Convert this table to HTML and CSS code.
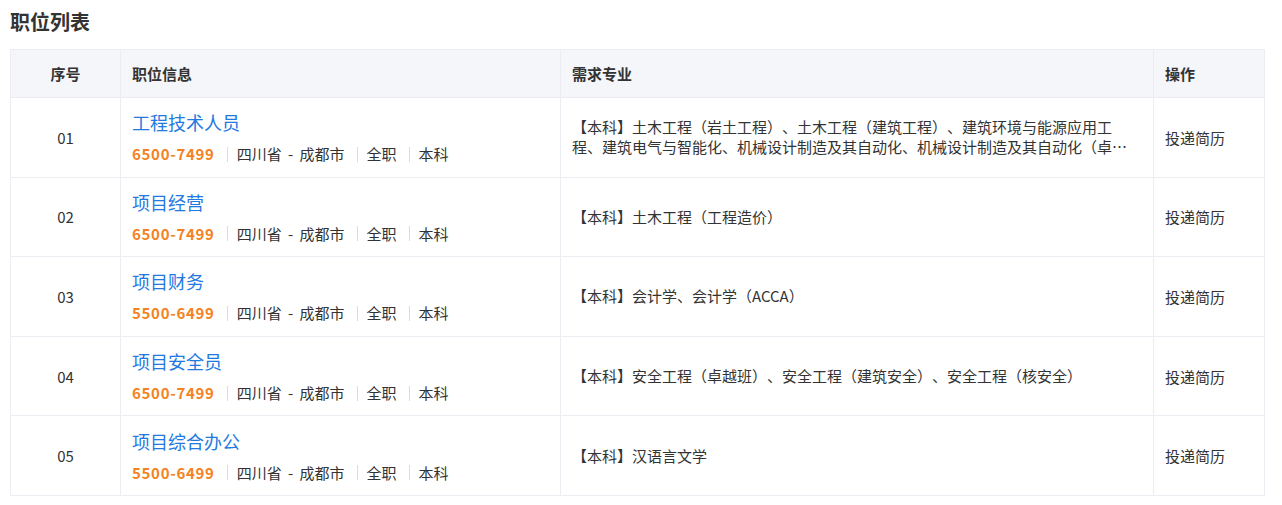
FILE: index.html
```html
<!DOCTYPE html>
<html lang="zh-CN">
<head>
<meta charset="utf-8">
<title>职位列表</title>
<link rel="stylesheet" href="styles.css">
</head>
<body>
<div class="page">
  <h2 class="page-title">职位列表</h2>
  <table class="job-table">
    <colgroup>
      <col class="c-no"><col class="c-info"><col class="c-major"><col class="c-op">
    </colgroup>
    <thead>
      <tr><th class="center">序号</th><th>职位信息</th><th>需求专业</th><th>操作</th></tr>
    </thead>
    <tbody>
      <tr>
        <td class="center no">01</td>
        <td><div class="job-name">工程技术人员</div><div class="meta"><span class="salary">6500-7499</span><span class="sep"></span><span class="loc">四川省 - 成都市</span><span class="sep"></span>全职<span class="sep"></span>本科</div></td>
        <td class="major-cell"><div class="major">【本科】土木工程（岩土工程）、土木工程（建筑工程）、建筑环境与能源应用工程、建筑电气与智能化、机械设计制造及其自动化、机械设计制造及其自动化（卓越班）</div></td>
        <td class="op">投递简历</td>
      </tr>
      <tr>
        <td class="center no">02</td>
        <td><div class="job-name">项目经营</div><div class="meta"><span class="salary">6500-7499</span><span class="sep"></span><span class="loc">四川省 - 成都市</span><span class="sep"></span>全职<span class="sep"></span>本科</div></td>
        <td class="major-cell"><div class="major">【本科】土木工程（工程造价）</div></td>
        <td class="op">投递简历</td>
      </tr>
      <tr>
        <td class="center no">03</td>
        <td><div class="job-name">项目财务</div><div class="meta"><span class="salary">5500-6499</span><span class="sep"></span><span class="loc">四川省 - 成都市</span><span class="sep"></span>全职<span class="sep"></span>本科</div></td>
        <td class="major-cell"><div class="major">【本科】会计学、会计学（ACCA）</div></td>
        <td class="op">投递简历</td>
      </tr>
      <tr>
        <td class="center no">04</td>
        <td><div class="job-name">项目安全员</div><div class="meta"><span class="salary">6500-7499</span><span class="sep"></span><span class="loc">四川省 - 成都市</span><span class="sep"></span>全职<span class="sep"></span>本科</div></td>
        <td class="major-cell"><div class="major">【本科】安全工程（卓越班）、安全工程（建筑安全）、安全工程（核安全）</div></td>
        <td class="op">投递简历</td>
      </tr>
      <tr>
        <td class="center no">05</td>
        <td><div class="job-name">项目综合办公</div><div class="meta"><span class="salary">5500-6499</span><span class="sep"></span><span class="loc">四川省 - 成都市</span><span class="sep"></span>全职<span class="sep"></span>本科</div></td>
        <td class="major-cell"><div class="major">【本科】汉语言文学</div></td>
        <td class="op">投递简历</td>
      </tr>
    </tbody>
  </table>
</div>
</body>
</html>
```
FILE: styles.css
```css
* { box-sizing: border-box; }
html, body { margin: 0; padding: 0; background: #fff; }
body {
  font-family: "Noto Sans CJK SC", "Noto Sans", sans-serif;
  color: #333;
  text-spacing-trim: space-all;
}
.page { padding: 10px 18px 0 10px; }
.page-title {
  margin: 0 0 15px;
  font-size: 20px;
  line-height: 24px;
  font-weight: 700;
  color: #333;
}
.job-table {
  width: 1254px;
  border-collapse: collapse;
  table-layout: fixed;
  border: 1px solid #ebedf3;
}
.c-no { width: 110px; }
.c-info { width: 440px; }
.c-major { width: 593px; }
.c-op { width: 111px; }
.job-table th, .job-table td {
  border: 1px solid #ebedf3;
  padding: 0 11px;
  text-align: left;
  vertical-align: middle;
  font-size: 15px;
}
.job-table th {
  height: 48px;
  background: #f5f6fa;
  font-weight: 700;
  color: #333;
}
.job-table td { height: 79.6px; padding-top: 12px; padding-bottom: 12px; }
.job-table td.major-cell { padding-right: 13px; }
.job-table .center { text-align: center; }
.no { font-size: 15px; color: #333; }
.job-name {
  font-size: 18px;
  line-height: 24px;
  color: #2379e0;
}
.meta {
  margin-top: 10px;
  font-size: 15px;
  line-height: 20px;
  color: #333;
  display: flex;
  align-items: center;
}
.salary { color: #f58220; font-weight: 700; letter-spacing: 0.7px; }
.loc { word-spacing: 3px; }
.sep {
  display: inline-block;
  width: 1px;
  height: 15px;
  background: #dcdcdc;
  margin: 0 9px 0 12px;
}
.major {
  font-size: 15px;
  line-height: 20px;
  color: #333;
  display: -webkit-box;
  -webkit-line-clamp: 2;
  -webkit-box-orient: vertical;
  overflow: hidden;
}
.op { color: #333; }
```
